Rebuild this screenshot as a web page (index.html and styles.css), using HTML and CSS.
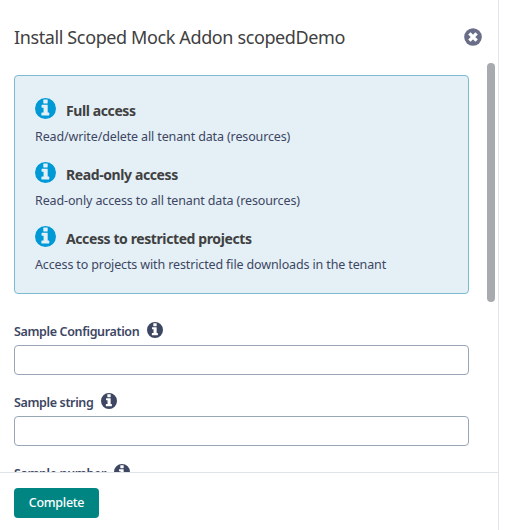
FILE: index.html
```html
<!DOCTYPE html>
<html lang="en">
<head>
<meta charset="utf-8">
<title>Install Addon</title>
<link rel="stylesheet" href="styles.css">
</head>
<body>
<svg class="defs" aria-hidden="true">
  <symbol id="info" viewBox="0 0 24 24"><path fill-rule="evenodd" d="M12 0a12 12 0 1 1 0 24a12 12 0 0 1 0-24zM10 1.800h4q.5 0 .5.5v3.400q0 .5-.5.5h-4q-.5 0-.5-.5v-3.400q0-.5.500-.5zM8 7.800h6q.5 0 .5.500V16.500h1.300q.5 0 .5.500v2.500q0 .5-.5.5h-8q-.5 0-.5-.5v-2.500q0-.5.500-.5H9.800v-5.500H8q-.5 0-.5-.5v-2.200q0-.5.500-.5z"/></symbol>
</svg>
<main class="panel">
  <header class="header">
    <h1 class="title">Install Scoped Mock Addon scopedDemo</h1>
    <svg class="close" viewBox="0 0 18 18"><circle cx="9" cy="9" r="8.800"/><path d="M5.400 5.400l7.200 7.200M12.600 5.400l-7.200 7.200"/></svg>
  </header>
  <div class="scroll">
    <div class="content">
      <section class="scopes">
        <div class="scope">
          <h2 class="scope-title"><svg class="scope-icon"><use href="#info"/></svg><span>Full access</span></h2>
          <p class="desc">Read/write/delete all tenant data (resources)</p>
        </div>
        <div class="scope">
          <h2 class="scope-title"><svg class="scope-icon"><use href="#info"/></svg><span>Read-only access</span></h2>
          <p class="desc">Read-only access to all tenant data (resources)</p>
        </div>
        <div class="scope">
          <h2 class="scope-title"><svg class="scope-icon"><use href="#info"/></svg><span>Access to restricted projects</span></h2>
          <p class="desc">Access to projects with restricted file downloads in the tenant</p>
        </div>
      </section>
      <div class="field">
        <label class="label" for="configuration"><span>Sample Configuration</span><svg class="label-icon"><use href="#info"/></svg></label>
        <input class="input" id="configuration" type="text">
      </div>
      <div class="field">
        <label class="label" for="string"><span>Sample string</span><svg class="label-icon"><use href="#info"/></svg></label>
        <input class="input" id="string" type="text">
      </div>
      <div class="field">
        <label class="label" for="number"><span>Sample number</span><svg class="label-icon"><use href="#info"/></svg></label>
        <input class="input" id="number" type="text">
      </div>
    </div>
    <div class="thumb"></div>
  </div>
  <footer class="footer"><button class="button">Complete</button></footer>
</main>
</body>
</html>
```
FILE: styles.css
```css
* { box-sizing: border-box; }
body { margin: 0; background: #fff; font-family: "Noto Sans", "Open Sans", sans-serif; color: #3d4663; overflow: hidden; }
h1, h2, p { margin: 0; }
.defs { position: absolute; width: 0; height: 0; }
.panel { display: flex; flex-direction: column; width: 499px; height: 530px; border-right: 1px solid #dfe5eb; }
.header { flex: none; display: flex; align-items: center; justify-content: space-between; height: 63px; padding: 12px 16px 0 14px; }
.title { margin-top: -2px; font-size: 18px; font-weight: 400; line-height: 26px; letter-spacing: -.38px; color: #404041; white-space: nowrap; }
.close { width: 18px; height: 18px; margin-top: -2px; fill: #696d87; stroke: none; }
.close path { stroke: #fff; stroke-width: 3.400; }
.scroll { flex: 1; min-height: 0; display: flex; justify-content: space-between; overflow: hidden; padding-right: 3px; }
.content { width: 469px; padding: 12px 0 0 14px; }
.thumb { flex: none; width: 8px; height: 239px; border-radius: 4px; background: #a7aaae; }
.scopes { height: 219px; padding: 20px; border: 1px solid #7bbad0; border-radius: 4px; background: #e5f0f6; }
.scope { height: 64px; }
.scope-title { display: flex; align-items: flex-start; gap: 10px; height: 31px; font-size: 14px; line-height: 20px; letter-spacing: -.4px; color: #404041; white-space: nowrap; }
.scope-title span { padding-top: 5px; }
.scope-icon { width: 21px; height: 21px; margin-top: 2px; fill: #0099d8; }
.desc { font-size: 12.500px; line-height: 20px; letter-spacing: -.13px; white-space: nowrap; }
.field { height: 71px; }
.scopes + .field { margin-top: 25px; }
.label { display: flex; align-items: flex-start; gap: 8px; height: 26px; padding-top: 1px; font-size: 12.500px; font-weight: 600; line-height: 24px; letter-spacing: -.36px; white-space: nowrap; }
.label-icon { width: 16px; height: 16px; margin-top: 2px; fill: #3d4663; }
.input { display: block; width: 455px; height: 30px; padding: 0 8px; border: 1px solid #98a6b5; border-radius: 4px; background: #fff; }
.footer { flex: none; height: 58px; padding: 15px 14px; border-top: 1px solid #dfe5eb; }
.button { display: block; width: 85px; height: 30px; padding: 0; border: 0; border-radius: 4px; background: #008582; color: #fff; font: 500 12.500px/30px "Noto Sans", "Open Sans", sans-serif; letter-spacing: -.3px; }
```
